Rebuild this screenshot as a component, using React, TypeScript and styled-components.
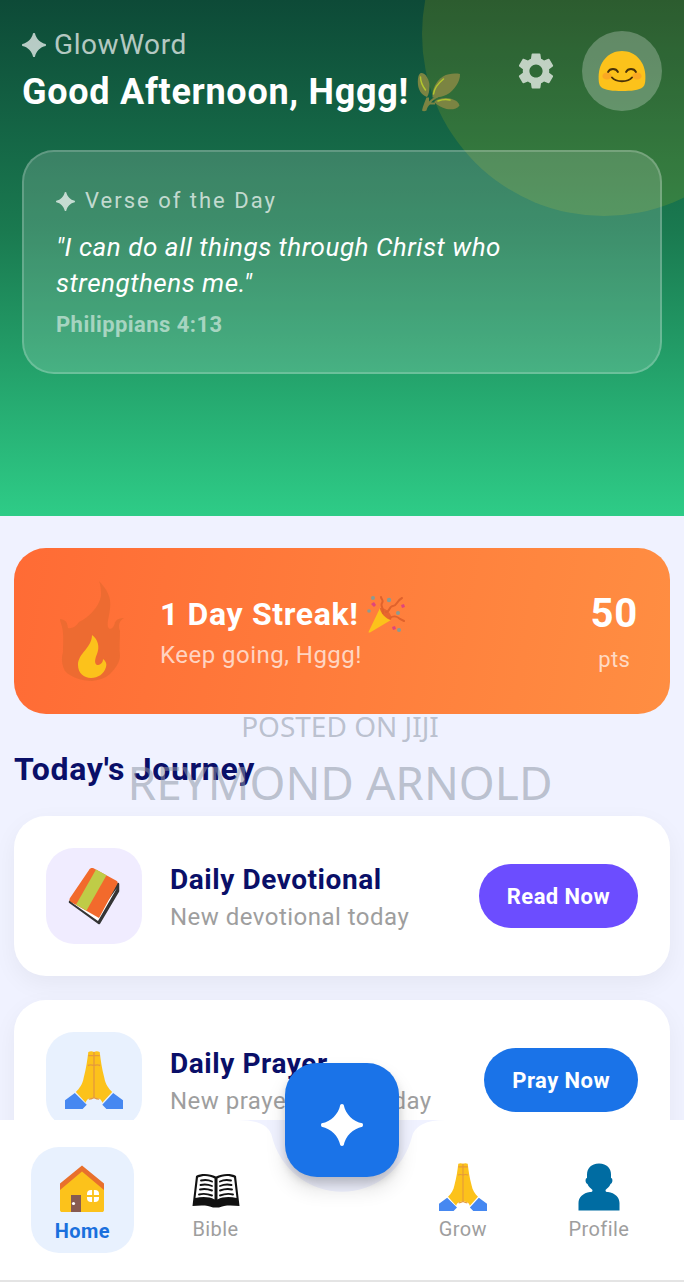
import React from 'react';
import styled, { createGlobalStyle } from 'styled-components';

const GlobalStyle = createGlobalStyle`
  * { box-sizing: border-box; letter-spacing: 0.02em; }
  body {
    margin: 0;
    background: #ffffff;
    font-family: Roboto, "Noto Sans", sans-serif;
  }
  h1, h2, h3, p, blockquote { margin: 0; }
  button { font: inherit; border: 0; cursor: pointer; }
  svg { display: block; flex: none; }
`;

const Screen = styled.div`
  position: relative;
  display: flex;
  flex-direction: column;
  height: 100vh;
  overflow: hidden;
  padding-bottom: 4px;
  background: #ffffff;
`;

const Scroller = styled.main`
  flex: 1;
  min-height: 0;
  overflow: hidden;
  background: #f0f2ff;
`;

const Hero = styled.header`
  position: relative;
  overflow: hidden;
  padding: 28px 22px 142px;
  color: #ffffff;
  background: linear-gradient(180deg, #0d4a37 0%, #1a7a50 45%, #2ecc87 100%);
`;

const Glow = styled.div`
  position: absolute;
  top: -148px;
  right: -102px;
  width: 364px;
  height: 364px;
  border-radius: 50%;
  background: rgba(255, 220, 0, 0.13);
`;

const TopBar = styled.div`
  position: relative;
  display: flex;
  align-items: center;
  margin-bottom: 36px;
`;

const Greeting = styled.div`
  flex: 1;
  display: flex;
  flex-direction: column;
  gap: 8px;
`;

const Brand = styled.p`
  display: flex;
  align-items: center;
  gap: 8px;
  font-size: 28px;
  line-height: 34px;
  color: rgba(255, 255, 255, 0.7);
`;

const Hello = styled.h1`
  display: flex;
  align-items: center;
  gap: 8px;
  font-size: 36px;
  line-height: 44px;
  font-weight: 700;
  white-space: nowrap;
`;

const IconButton = styled.button`
  display: grid;
  place-items: center;
  width: 48px;
  height: 48px;
  margin-right: 22px;
  padding: 0;
  color: rgba(255, 255, 255, 0.7);
  background: none;
`;

const Avatar = styled.button`
  display: grid;
  place-items: center;
  width: 80px;
  height: 80px;
  padding: 0;
  border-radius: 50%;
  background: rgba(255, 255, 255, 0.25);
`;

const VerseCard = styled.section`
  position: relative;
  padding: 33px 32px 31px;
  border: 2px solid rgba(255, 255, 255, 0.2);
  border-radius: 32px;
  background: rgba(255, 255, 255, 0.16);
`;

const VerseLabel = styled.h2`
  display: flex;
  align-items: center;
  gap: 10px;
  margin-bottom: 12px;
  font-size: 22px;
  line-height: 32px;
  font-weight: 400;
  letter-spacing: 2px;
  color: rgba(255, 255, 255, 0.7);
`;

const Quote = styled.blockquote`
  max-width: 500px;
  margin-bottom: 8px;
  font-size: 26px;
  line-height: 36px;
  font-style: italic;
`;

const Reference = styled.p`
  font-size: 22px;
  line-height: 32px;
  font-weight: 700;
  color: rgba(255, 255, 255, 0.54);
`;

const Content = styled.div`
  padding: 32px 14px 0;
`;

const Streak = styled.section`
  display: flex;
  align-items: center;
  padding: 32px;
  border-radius: 32px;
  color: #ffffff;
  background: linear-gradient(100deg, #ff6b35, #ff8e42);
`;

const StreakText = styled.div`
  flex: 1;
  margin-left: 22px;
  padding-top: 4px;
`;

const StreakTitle = styled.h2`
  display: flex;
  align-items: center;
  gap: 8px;
  font-size: 32px;
  line-height: 44px;
  font-weight: 700;
`;

const StreakNote = styled.p`
  font-size: 24px;
  line-height: 38px;
  color: rgba(255, 255, 255, 0.7);
`;

const Points = styled.p`
  display: flex;
  flex-direction: column;
  align-items: center;
  padding-top: 10px;
  font-size: 22px;
  line-height: 44px;
  color: rgba(255, 255, 255, 0.7);
`;

const PointsValue = styled.strong`
  font-size: 40px;
  line-height: 48px;
  color: #ffffff;
`;

const SectionTitle = styled.h2`
  margin: 36px 0 28px;
  font-size: 32px;
  line-height: 38px;
  font-weight: 700;
  color: #0a0f68;
`;

const Tasks = styled.div`
  display: flex;
  flex-direction: column;
  gap: 24px;
`;

const Task = styled.article`
  display: flex;
  align-items: center;
  gap: 28px;
  padding: 32px;
  border-radius: 32px;
  background: #ffffff;
  box-shadow: 0 8px 24px rgba(0, 0, 0, 0.05);
`;

const TaskIcon = styled.div<{ $tint: string }>`
  display: grid;
  place-items: center;
  flex: none;
  width: 96px;
  height: 96px;
  border-radius: 28px;
  background: ${(p) => p.$tint};
`;

const TaskText = styled.div`
  flex: 1;
  min-width: 0;
  padding-top: 4px;
`;

const TaskTitle = styled.h3`
  font-size: 28px;
  line-height: 38px;
  font-weight: 700;
  color: #0a0f68;
`;

const TaskNote = styled.p`
  font-size: 24px;
  line-height: 36px;
  color: #9e9e9e;
  white-space: nowrap;
`;

const Pill = styled.button<{ $color: string }>`
  && { font-size: 22px; font-weight: 700; }
  height: 64px;
  padding: 0 28px;
  border-radius: 32px;
  color: #ffffff;
  background: ${(p) => p.$color};
`;

const Nav = styled.nav`
  position: relative;
  display: flex;
  justify-content: space-around;
  align-items: center;
  height: 160px;
  padding: 0 14px;
  background: #ffffff;
`;

const Notch = styled.svg`
  position: absolute;
  top: 0;
  left: 50%;
  margin-left: -104px;
`;

const NavItem = styled.a<{ $active?: boolean }>`
  display: flex;
  flex-direction: column;
  align-items: center;
  gap: 4px;
  padding: 18px 24px ${(p) => (p.$active ? 8 : 12)}px;
  border-radius: 28px;
  font-size: 20px;
  line-height: 28px;
  font-weight: ${(p) => (p.$active ? 700 : 400)};
  color: ${(p) => (p.$active ? '#1a70dd' : '#9e9e9e')};
  background: ${(p) => (p.$active ? '#e8f1fe' : 'none')};
  text-decoration: none;
`;

const NavSpace = styled.div`
  width: 84px;
`;

const Fab = styled.button`
  position: absolute;
  top: -57px;
  left: 50%;
  display: grid;
  place-items: center;
  width: 114px;
  height: 114px;
  margin-left: -57px;
  padding: 10px 0 0;
  border-radius: 32px;
  background: #1a73e8;
  box-shadow: 0 12px 20px rgba(0, 0, 0, 0.12), 0 6px 8px rgba(0, 0, 0, 0.14);
`;

const HomeIndicator = styled.div`
  height: 2px;
  background: #e4e4e4;
`;

const Watermark = styled.div`
  position: absolute;
  top: 707px;
  left: 0;
  right: 4px;
  font-family: "Noto Sans", sans-serif;
  text-align: center;
  color: rgba(142, 150, 165, 0.55);
  pointer-events: none;
`;

const MarkSmall = styled.p`
  font-size: 28px;
  line-height: 38px;
  letter-spacing: 0;
`;

const MarkLarge = styled.p`
  font-size: 46px;
  line-height: 74px;
  letter-spacing: 0;
`;

const Sparkle = ({ size, color = 'currentColor' }: { size: number; color?: string }) => (
  <svg width={size} height={size} viewBox="0 0 40 40" fill={color} aria-hidden="true">
    <path d="M18.400 0.600Q20 -0.600 21.600 0.600C23.400 9.600 30.400 16.600 39.400 18.400Q40.600 20 39.400 21.600C30.400 23.400 23.400 30.400 21.600 39.400Q20 40.600 18.400 39.400C16.600 30.400 9.600 23.400 0.600 21.600Q-0.600 20 0.600 18.400C9.600 16.600 16.600 9.600 18.400 0.600Z" />
  </svg>
);

const Gear = () => (
  <svg width="44" height="44" viewBox="0 0 24 24" fill="currentColor" aria-hidden="true">
    <path d="M19.14 12.94c.04-.3.06-.61.06-.94 0-.32-.02-.64-.07-.94l2.03-1.58a.49.49 0 0 0 .12-.61l-1.92-3.32a.488.488 0 0 0-.59-.22l-2.39.96c-.5-.38-1.03-.7-1.62-.94l-.36-2.54a.484.484 0 0 0-.48-.41h-3.84c-.24 0-.43.17-.47.41l-.36 2.54c-.59.24-1.13.57-1.62.94l-2.39-.96c-.22-.08-.47 0-.59.22L2.74 8.87c-.12.21-.08.47.12.61l2.03 1.58c-.05.3-.09.63-.09.94s.02.64.07.94l-2.03 1.58a.49.49 0 0 0-.12.61l1.92 3.32c.12.22.37.29.59.22l2.39-.96c.5.38 1.03.7 1.62.94l.36 2.54c.05.24.24.41.48.41h3.84c.24 0 .44-.17.47-.41l.36-2.54c.59-.24 1.13-.56 1.62-.94l2.39.96c.22.08.47 0 .59-.22l1.92-3.32c.12-.22.07-.47-.12-.61l-2.01-1.58zM12 15.6c-1.98 0-3.6-1.62-3.6-3.6s1.62-3.6 3.6-3.6 3.6 1.62 3.6 3.6-1.62 3.6-3.6 3.6z" />
  </svg>
);

const Smiley = () => (
  <svg width="48" height="42" viewBox="0 0 48 42" aria-hidden="true">
    <path d="M24 1C10.5 1 .6 12 .6 27c0 4 .2 8 2.400 10C7 40.500 15 41 24 41s17-.5 21-4c2.200-2 2.400-6 2.400-10C47.400 12 37.500 1 24 1z" fill="#fcc21b" />
    <ellipse cx="9" cy="26" rx="4.600" ry="3.600" fill="#f79329" opacity=".55" />
    <ellipse cx="39" cy="26" rx="4.600" ry="3.600" fill="#f79329" opacity=".55" />
    <g fill="none" stroke="#4a3208" strokeLinecap="round">
      <path d="M10 22C12 18 18 18 20 22M28 22C30 18 36 18 38 22" strokeWidth="1.800" />
      <path d="M14 27.500C18 32.500 30 32.500 34 27.500" strokeWidth="2" />
    </g>
  </svg>
);

const Herb = () => (
  <svg width="44" height="40" viewBox="0 0 44 40" aria-hidden="true">
    <g fill="#7b8442">
      <path d="M4 1C8 .5 12.500 7 12.500 14c0 5-1 9-2.500 11C4 23 .8 17 .8 10 .8 5 2 1.500 4 1z" />
      <path d="M43 2c.5 7-6 17-13 20.500-4 2-9.500 3.500-14.500 3C15 17 19 9 26 4.500 31 1.500 38 1 43 2z" />
      <path d="M17 30c5-4.500 13-4.500 18-3 4 1.300 7 3.500 7.500 6.500-2 3.500-8 4.500-13 3.500-5-1.200-9-4-12.500-7z" />
      <path d="M5 38.500c1-5 3-9 4.500-13l2.500 0v4c3-3 6-5 8-6l1 2c-3 1-5 3-7 5h4v2l-5 0c-2 1.500-3 3.500-3.500 6-1.500 1-3.500 1-4.500 0z" />
    </g>
    <g fill="none" stroke="#b2c72e" strokeWidth="1.500" strokeLinecap="round">
      <path d="M3.500 5c0 5 2 9 5 13M16.500 22c1-7 5-11 10-15M21 29c4-1.500 8-2 12-1" />
    </g>
  </svg>
);

const Flame = () => (
  <svg width="92" height="102" viewBox="0 0 92 102" aria-hidden="true">
    <path d="M53 1C60 8 66 17 64 29c-1 8-3 13-2 18 2 4 6 1 7-5 1 0 1-4 9-4-5 3-6 8-4 13 0 9-1 17 0 25 0 6-5 13-9 17-5 5-11 7-19 8-10 0-22-4-27-10-3-6-4-12-2-19 0-8 1-18-1-25-1-4-2-6-2-8 7 1 7 4 8 9 3 1 8-1 11-6 10-5 20-15 22-26 0-5 0-10-2-15z" fill="#e6692f" opacity=".7" />
    <path d="M46 55c6 4 8 12 5 19-2 5-3 9 0 11 3 0 6-2 6-6 3 2 4 5 3 8-2 7-8 11-15 11s-13-5-13-13c0-12 14-17 14-30z" fill="#fcc21b" />
  </svg>
);

const Popper = () => (
  <svg width="38" height="38" viewBox="0 0 38 38" aria-hidden="true">
    <path d="M1.500 37L13 13c3 6 7 10 11 12L3 37.500c-1 .3-1.600 0-1.500-.5z" fill="#fcc21b" />
    <path d="M13 13c5-1 13 6 11 12-5-1-11-7-11-12z" fill="#e8652e" />
    <g fill="none" stroke="#e0622c" strokeWidth="2" strokeLinecap="round">
      <path d="M16 18c1-5-3-7-1-10s-1-4-1-6M19 17c4 0 3-6 7-6s3-5 9-8M23 23c4-3 8-1 10 1l4 2" />
    </g>
    <g fill="#8a9b93">
      <circle cx="6" cy="3" r="2" /><circle cx="22" cy="5" r="2.200" />
      <circle cx="2" cy="16" r="1.800" /><circle cx="31" cy="18" r="2" /><circle cx="32" cy="35" r="2" />
    </g>
    <g fill="#e0457b">
      <path d="M4 9l3-2 2 3-2 2zM34 10l3-1 1 3-3 1zM25 32l3-1 1 3-3 1z" />
    </g>
  </svg>
);

const Book = () => (
  <svg width="52" height="58" viewBox="0 0 52 58" aria-hidden="true">
    <path d="M2 35L31 56 50 24v-7L31 50 3 34z" fill="#353535" stroke="#353535" strokeWidth="2.500" strokeLinejoin="round" />
    <path d="M3 35L30 54 49 21 30 47z" fill="#fff" />
    <path d="M21 3c1.200-2 3-2.500 5-1.500L48 13.500c2 1 2 2.500 1 4L31 51 3 35c-1.500-1-2-2.500-1-4z" fill="#f26a2c" />
    <path d="M28 2.500L38.500 8.300 18.500 43.500 8 37.800z" fill="#bfcc47" />
  </svg>
);

const Praying = ({ size }: { size: number }) => (
  <svg width={size} height={size} viewBox="0 0 56 56" aria-hidden="true">
    <path d="M22.500 1c2-1 3.500-1 5.500 0 2-1 3.500-1 5.500 0 1 8 2 16 4.500 25 1 6 4 10 7.500 13.500L36 50c-1-4-4-4.500-8-5-4 .5-7 1-8 5L10.500 39.500c3.500-3.500 6.500-7.500 7.500-13.500 2.500-9 3.500-17 4.500-25z" fill="#fcc21b" />
    <path d="M28 1v44M28 45c-2 1-3 1.500-5 1.500M28 45c2 1 3 1.500 5 1.500M22.500 4.500h11M22 14c2-.8 4-.8 6 0 2-.8 4-.8 6 0" stroke="#e59a3c" strokeWidth="1.300" fill="none" />
    <path d="M0 56V47.500L9.500 40.500 21 52l-4 4zM56 56V47.500L46.500 40.500 36 52l4 4z" fill="#4688f1" />
  </svg>
);

const House = () => (
  <svg width="46" height="48" viewBox="0 0 46 48" aria-hidden="true">
    <path d="M1 22L23 3l22 19v23c0 1.500-1 2-2 2H3c-1 0-2-.5-2-2z" fill="#fcc21b" />
    <path d="M1 18.500L23 .5l22 18v6.500L23 6.500 1 25z" fill="#e8702c" />
    <path d="M12 30h10v17H12z" fill="#875b51" />
    <circle cx="14.500" cy="38.500" r="1.600" fill="#fff" />
    <rect x="28" y="25" width="12" height="12" rx="4" fill="#fff" />
    <path d="M34 25v12M28 31h12" stroke="#fcc21b" strokeWidth="1.800" />
  </svg>
);

const OpenBook = () => (
  <svg width="48" height="48" viewBox="0 0 48 48" aria-hidden="true">
    <path d="M4 13C9 10 18 10.500 24 13.500c6-3 15-3.500 20-.5l3.500 30c-8-1-16-1-20.500 1.500h-6C16.500 42 8.500 42 .5 43z" fill="#111" />
    <path d="M6 14.500c5-2.500 12-2 16.500 1v21c-5-3-13-3-19-1.500z" fill="#fff" />
    <path d="M42 14.500c-5-2.500-12-2-16.500 1v21c5-3 13-3 19-1.500z" fill="#fff" />
    <g fill="none" stroke="#111" strokeWidth="1.900" strokeLinecap="round">
      <path d="M9 17.500c4-1 8-.5 11 1M8.500 22c4-1 8-.5 11.500 1M8 26.500c4-1 8-.5 12 1M7 31.500c4-1 9-.5 13 1" />
      <path d="M39 17.500c-4-1-8-.5-11 1M39.500 22c-4-1-8-.5-11.500 1M40 26.500c-4-1-8-.5-12 1M41 31.500c-4-1-9-.5-13 1" />
    </g>
  </svg>
);

const Person = () => (
  <svg width="42" height="48" viewBox="0 0 42 48" aria-hidden="true">
    <path d="M21 .5c8 0 12 5 12 11V15c2 0 2 5-.5 6C31.500 24 29 25 27.500 27c0 2 1 2 2.500 2 7 1 11.500 5.500 11.500 11v7.500H.5V40C.5 34.500 5 30 12 29c1.500 0 2.500 0 2.500-2-1.500-2-4-3-5-6C7 20 7 15 9 15v-3.500C9 5.500 13 .5 21 .5z" fill="#006ca2" />
  </svg>
);

export default function App() {
  return (
    <Screen>
      <GlobalStyle />
      <Scroller>
        <Hero>
          <Glow />
          <TopBar>
            <Greeting>
              <Brand><Sparkle size={24} />GlowWord</Brand>
              <Hello>Good Afternoon, Hggg! <Herb /></Hello>
            </Greeting>
            <IconButton aria-label="Settings"><Gear /></IconButton>
            <Avatar aria-label="Account"><Smiley /></Avatar>
          </TopBar>
          <VerseCard>
            <VerseLabel><Sparkle size={19} />Verse of the Day</VerseLabel>
            <Quote>"I can do all things through Christ who strengthens me."</Quote>
            <Reference>Philippians 4:13</Reference>
          </VerseCard>
        </Hero>
        <Content>
          <Streak>
            <Flame />
            <StreakText>
              <StreakTitle>1 Day Streak! <Popper /></StreakTitle>
              <StreakNote>Keep going, Hggg!</StreakNote>
            </StreakText>
            <Points><PointsValue>50</PointsValue>pts</Points>
          </Streak>
          <SectionTitle>Today's Journey</SectionTitle>
          <Tasks>
            <Task>
              <TaskIcon $tint="#f0ecff"><Book /></TaskIcon>
              <TaskText>
                <TaskTitle>Daily Devotional</TaskTitle>
                <TaskNote>New devotional today</TaskNote>
              </TaskText>
              <Pill $color="#6c4dff">Read Now</Pill>
            </Task>
            <Task>
              <TaskIcon $tint="#e8f1fe"><Praying size={58} /></TaskIcon>
              <TaskText>
                <TaskTitle>Daily Prayer</TaskTitle>
                <TaskNote>New prayer focus today</TaskNote>
              </TaskText>
              <Pill $color="#1a73e8">Pray Now</Pill>
            </Task>
          </Tasks>
        </Content>
      </Scroller>
      <Nav>
        <Notch width="208" height="74" viewBox="0 0 208 74" aria-hidden="true">
          <path d="M0 0Q30 0 34 16.600A72 72 0 0 0 174 16.600Q178 0 208 0Z" fill="#f0f2ff" />
        </Notch>
        <NavItem href="#home" $active><House />Home</NavItem>
        <NavItem href="#bible"><OpenBook />Bible</NavItem>
        <NavSpace />
        <NavItem href="#grow"><Praying size={48} />Grow</NavItem>
        <NavItem href="#profile"><Person />Profile</NavItem>
        <Fab aria-label="Open assistant"><Sparkle size={42} color="#ffffff" /></Fab>
      </Nav>
      <HomeIndicator />
      <Watermark>
        <MarkSmall>POSTED ON JIJI</MarkSmall>
        <MarkLarge>REYMOND ARNOLD</MarkLarge>
      </Watermark>
    </Screen>
  );
}
